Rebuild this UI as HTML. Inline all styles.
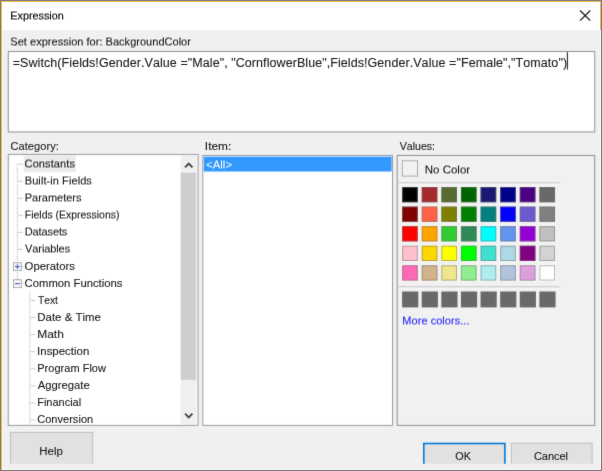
<!DOCTYPE html>
<html><head><meta charset="utf-8"><title>Expression</title>
<style>
html,body{margin:0;padding:0;background:#f0f0f0;overflow:hidden}
body{width:602px;height:471px;overflow:hidden;position:relative}
svg{position:absolute;left:0;top:0;display:block;overflow:hidden;font-family:"Liberation Sans",Arial,sans-serif;font-size:11px}
text{white-space:pre;font-kerning:none}
</style></head><body>
<svg width="602" height="471" viewBox="0 0 602 471">
<defs><filter id="soft" filterUnits="userSpaceOnUse" x="-10" y="-10" width="622" height="491" color-interpolation-filters="sRGB"><feConvolveMatrix order="3" kernelMatrix="1 5 1 5 40 5 1 5 1" edgeMode="duplicate" preserveAlpha="true"/></filter><filter id="tx" filterUnits="userSpaceOnUse" x="-10" y="-10" width="622" height="491" color-interpolation-filters="sRGB"><feConvolveMatrix order="3" kernelMatrix="1 4 1 4 56 4 1 4 1" edgeMode="none" preserveAlpha="false"/></filter><filter id="half" filterUnits="userSpaceOnUse" x="-10" y="-10" width="622" height="491" color-interpolation-filters="sRGB"><feConvolveMatrix order="3" kernelMatrix="0 0 0 1 14 1 1 14 1" edgeMode="none" preserveAlpha="false"/></filter></defs>
<g filter="url(#soft)">
<rect x="-10.00" y="-10.00" width="622.00" height="491.00" fill="#f0f0f0"/>
<rect x="2.00" y="2.00" width="598.00" height="28.30" fill="#ffffff"/>

<path d="M580.1 10.5 L590.3 20.7 M590.3 10.5 L580.1 20.7" stroke="#0a0a0a" stroke-width="1.1" fill="none"/>

<rect x="8.30" y="51.50" width="586.45" height="80.45" fill="#fff" stroke="#909090" stroke-width="1.0"/>

<rect x="566.90" y="52.20" width="1.00" height="17.40" fill="#111"/>



<rect x="8.30" y="154.45" width="189.70" height="270.95" fill="#fff" stroke="#989ba2" stroke-width="1.0"/>
<clipPath id="tc"><rect x="8.7" y="154.9" width="172" height="270"/></clipPath>
<g clip-path="url(#tc)">
<rect x="23.70" y="155.60" width="52.10" height="16.60" fill="#ebebeb"/>
<path d="M17.3 164 V279.5" stroke="#b0b0b0" stroke-width="1" stroke-dasharray="1 1" fill="none"/>
<path d="M29.9 291.5 V426" stroke="#b0b0b0" stroke-width="1" stroke-dasharray="1 1" fill="none"/>
<path d="M18 164.15 H23" stroke="#c8c8c8" stroke-width="1" fill="none"/>

<path d="M18 181.20 H23" stroke="#c8c8c8" stroke-width="1" fill="none"/>

<path d="M18 198.25 H23" stroke="#c8c8c8" stroke-width="1" fill="none"/>

<path d="M18 215.30 H23" stroke="#c8c8c8" stroke-width="1" fill="none"/>

<path d="M18 232.35 H23" stroke="#c8c8c8" stroke-width="1" fill="none"/>

<path d="M18 249.40 H23" stroke="#c8c8c8" stroke-width="1" fill="none"/>

<path d="M21.7 266.45 H23.5" stroke="#c8c8c8" stroke-width="1" fill="none"/>
<rect x="13.50" y="262.70" width="7.8" height="7.8" fill="#f8f9fc" stroke="#ababab" stroke-width="1"/>
<path d="M15.00 266.60 H19.80" stroke="#5566bb" stroke-width="1.1" fill="none"/>
<path d="M17.40 264.20 V269.00" stroke="#5566bb" stroke-width="1.1" fill="none"/>

<path d="M21.7 283.50 H23.5" stroke="#c8c8c8" stroke-width="1" fill="none"/>
<rect x="13.50" y="279.75" width="7.8" height="7.8" fill="#f8f9fc" stroke="#ababab" stroke-width="1"/>
<path d="M15.00 283.65 H19.80" stroke="#5566bb" stroke-width="1.1" fill="none"/>

<path d="M30.5 300.55 H35.5" stroke="#c8c8c8" stroke-width="1" fill="none"/>

<path d="M30.5 317.60 H35.5" stroke="#c8c8c8" stroke-width="1" fill="none"/>

<path d="M30.5 334.65 H35.5" stroke="#c8c8c8" stroke-width="1" fill="none"/>

<path d="M30.5 351.70 H35.5" stroke="#c8c8c8" stroke-width="1" fill="none"/>

<path d="M30.5 368.75 H35.5" stroke="#c8c8c8" stroke-width="1" fill="none"/>

<path d="M30.5 385.80 H35.5" stroke="#c8c8c8" stroke-width="1" fill="none"/>

<path d="M30.5 402.85 H35.5" stroke="#c8c8c8" stroke-width="1" fill="none"/>

<path d="M30.5 419.90 H35.5" stroke="#c8c8c8" stroke-width="1" fill="none"/>

</g>
<rect x="180.70" y="154.90" width="15.50" height="270.00" fill="#f0f0f0"/>
<rect x="180.70" y="172.70" width="15.50" height="207.10" fill="#cdcdcd"/>
<path d="M185.1 167.3 L188.75 163.6 L192.4 167.3" stroke="#3c3c3c" stroke-width="1.75" fill="none"/>
<path d="M185.1 413.7 L188.75 417.4 L192.4 413.7" stroke="#3c3c3c" stroke-width="1.75" fill="none"/>
<rect x="202.80" y="155.45" width="189.70" height="269.95" fill="#fff" stroke="#989ba2" stroke-width="1.0"/>
<rect x="203.80" y="156.65" width="187.80" height="14.85" fill="#3399ff"/>

<rect x="397.20" y="155.45" width="197.55" height="269.95" fill="#f1f1f1" stroke="#8e8e8e" stroke-width="1.0"/>
<rect x="402.30" y="160.80" width="15.20" height="15.30" fill="#f2f2f2" stroke="#a8a8a8" stroke-width="1.0"/>

<rect x="397.70" y="182.20" width="161.80" height="1.30" fill="#cacaca"/>
<rect x="397.70" y="183.50" width="161.80" height="1.00" fill="#f8f8f8"/>
<rect x="401.00" y="185.90" width="17.90" height="17.50" fill="#f8f8f8"/>
<rect x="402.10" y="187.00" width="15.70" height="15.30" fill="#000000"/>
<rect x="402.60" y="187.50" width="14.70" height="14.30" fill="none" stroke="#6e6e6e" stroke-opacity="0.5" stroke-width="1"/>
<rect x="420.61" y="185.90" width="17.90" height="17.50" fill="#f8f8f8"/>
<rect x="421.71" y="187.00" width="15.70" height="15.30" fill="#A52A2A"/>
<rect x="422.21" y="187.50" width="14.70" height="14.30" fill="none" stroke="#6e6e6e" stroke-opacity="0.5" stroke-width="1"/>
<rect x="440.22" y="185.90" width="17.90" height="17.50" fill="#f8f8f8"/>
<rect x="441.32" y="187.00" width="15.70" height="15.30" fill="#556B2F"/>
<rect x="441.82" y="187.50" width="14.70" height="14.30" fill="none" stroke="#6e6e6e" stroke-opacity="0.5" stroke-width="1"/>
<rect x="459.83" y="185.90" width="17.90" height="17.50" fill="#f8f8f8"/>
<rect x="460.93" y="187.00" width="15.70" height="15.30" fill="#006400"/>
<rect x="461.43" y="187.50" width="14.70" height="14.30" fill="none" stroke="#6e6e6e" stroke-opacity="0.5" stroke-width="1"/>
<rect x="479.44" y="185.90" width="17.90" height="17.50" fill="#f8f8f8"/>
<rect x="480.54" y="187.00" width="15.70" height="15.30" fill="#191970"/>
<rect x="481.04" y="187.50" width="14.70" height="14.30" fill="none" stroke="#6e6e6e" stroke-opacity="0.5" stroke-width="1"/>
<rect x="499.05" y="185.90" width="17.90" height="17.50" fill="#f8f8f8"/>
<rect x="500.15" y="187.00" width="15.70" height="15.30" fill="#00008B"/>
<rect x="500.65" y="187.50" width="14.70" height="14.30" fill="none" stroke="#6e6e6e" stroke-opacity="0.5" stroke-width="1"/>
<rect x="518.66" y="185.90" width="17.90" height="17.50" fill="#f8f8f8"/>
<rect x="519.76" y="187.00" width="15.70" height="15.30" fill="#4B0082"/>
<rect x="520.26" y="187.50" width="14.70" height="14.30" fill="none" stroke="#6e6e6e" stroke-opacity="0.5" stroke-width="1"/>
<rect x="538.27" y="185.90" width="17.90" height="17.50" fill="#f8f8f8"/>
<rect x="539.37" y="187.00" width="15.70" height="15.30" fill="#696969"/>
<rect x="539.87" y="187.50" width="14.70" height="14.30" fill="none" stroke="#6e6e6e" stroke-opacity="0.5" stroke-width="1"/>
<rect x="401.00" y="205.47" width="17.90" height="17.50" fill="#f8f8f8"/>
<rect x="402.10" y="206.57" width="15.70" height="15.30" fill="#800000"/>
<rect x="402.60" y="207.07" width="14.70" height="14.30" fill="none" stroke="#6e6e6e" stroke-opacity="0.5" stroke-width="1"/>
<rect x="420.61" y="205.47" width="17.90" height="17.50" fill="#f8f8f8"/>
<rect x="421.71" y="206.57" width="15.70" height="15.30" fill="#FF6347"/>
<rect x="422.21" y="207.07" width="14.70" height="14.30" fill="none" stroke="#6e6e6e" stroke-opacity="0.5" stroke-width="1"/>
<rect x="440.22" y="205.47" width="17.90" height="17.50" fill="#f8f8f8"/>
<rect x="441.32" y="206.57" width="15.70" height="15.30" fill="#808000"/>
<rect x="441.82" y="207.07" width="14.70" height="14.30" fill="none" stroke="#6e6e6e" stroke-opacity="0.5" stroke-width="1"/>
<rect x="459.83" y="205.47" width="17.90" height="17.50" fill="#f8f8f8"/>
<rect x="460.93" y="206.57" width="15.70" height="15.30" fill="#008000"/>
<rect x="461.43" y="207.07" width="14.70" height="14.30" fill="none" stroke="#6e6e6e" stroke-opacity="0.5" stroke-width="1"/>
<rect x="479.44" y="205.47" width="17.90" height="17.50" fill="#f8f8f8"/>
<rect x="480.54" y="206.57" width="15.70" height="15.30" fill="#008080"/>
<rect x="481.04" y="207.07" width="14.70" height="14.30" fill="none" stroke="#6e6e6e" stroke-opacity="0.5" stroke-width="1"/>
<rect x="499.05" y="205.47" width="17.90" height="17.50" fill="#f8f8f8"/>
<rect x="500.15" y="206.57" width="15.70" height="15.30" fill="#0000FF"/>
<rect x="500.65" y="207.07" width="14.70" height="14.30" fill="none" stroke="#6e6e6e" stroke-opacity="0.5" stroke-width="1"/>
<rect x="518.66" y="205.47" width="17.90" height="17.50" fill="#f8f8f8"/>
<rect x="519.76" y="206.57" width="15.70" height="15.30" fill="#6A5ACD"/>
<rect x="520.26" y="207.07" width="14.70" height="14.30" fill="none" stroke="#6e6e6e" stroke-opacity="0.5" stroke-width="1"/>
<rect x="538.27" y="205.47" width="17.90" height="17.50" fill="#f8f8f8"/>
<rect x="539.37" y="206.57" width="15.70" height="15.30" fill="#808080"/>
<rect x="539.87" y="207.07" width="14.70" height="14.30" fill="none" stroke="#6e6e6e" stroke-opacity="0.5" stroke-width="1"/>
<rect x="401.00" y="225.04" width="17.90" height="17.50" fill="#f8f8f8"/>
<rect x="402.10" y="226.14" width="15.70" height="15.30" fill="#FF0000"/>
<rect x="402.60" y="226.64" width="14.70" height="14.30" fill="none" stroke="#6e6e6e" stroke-opacity="0.5" stroke-width="1"/>
<rect x="420.61" y="225.04" width="17.90" height="17.50" fill="#f8f8f8"/>
<rect x="421.71" y="226.14" width="15.70" height="15.30" fill="#FFA500"/>
<rect x="422.21" y="226.64" width="14.70" height="14.30" fill="none" stroke="#6e6e6e" stroke-opacity="0.5" stroke-width="1"/>
<rect x="440.22" y="225.04" width="17.90" height="17.50" fill="#f8f8f8"/>
<rect x="441.32" y="226.14" width="15.70" height="15.30" fill="#32CD32"/>
<rect x="441.82" y="226.64" width="14.70" height="14.30" fill="none" stroke="#6e6e6e" stroke-opacity="0.5" stroke-width="1"/>
<rect x="459.83" y="225.04" width="17.90" height="17.50" fill="#f8f8f8"/>
<rect x="460.93" y="226.14" width="15.70" height="15.30" fill="#2E8B57"/>
<rect x="461.43" y="226.64" width="14.70" height="14.30" fill="none" stroke="#6e6e6e" stroke-opacity="0.5" stroke-width="1"/>
<rect x="479.44" y="225.04" width="17.90" height="17.50" fill="#f8f8f8"/>
<rect x="480.54" y="226.14" width="15.70" height="15.30" fill="#00FFFF"/>
<rect x="481.04" y="226.64" width="14.70" height="14.30" fill="none" stroke="#6e6e6e" stroke-opacity="0.5" stroke-width="1"/>
<rect x="499.05" y="225.04" width="17.90" height="17.50" fill="#f8f8f8"/>
<rect x="500.15" y="226.14" width="15.70" height="15.30" fill="#6495ED"/>
<rect x="500.65" y="226.64" width="14.70" height="14.30" fill="none" stroke="#6e6e6e" stroke-opacity="0.5" stroke-width="1"/>
<rect x="518.66" y="225.04" width="17.90" height="17.50" fill="#f8f8f8"/>
<rect x="519.76" y="226.14" width="15.70" height="15.30" fill="#9400D3"/>
<rect x="520.26" y="226.64" width="14.70" height="14.30" fill="none" stroke="#6e6e6e" stroke-opacity="0.5" stroke-width="1"/>
<rect x="538.27" y="225.04" width="17.90" height="17.50" fill="#f8f8f8"/>
<rect x="539.37" y="226.14" width="15.70" height="15.30" fill="#C0C0C0"/>
<rect x="539.87" y="226.64" width="14.70" height="14.30" fill="none" stroke="#6e6e6e" stroke-opacity="0.5" stroke-width="1"/>
<rect x="401.00" y="244.61" width="17.90" height="17.50" fill="#f8f8f8"/>
<rect x="402.10" y="245.71" width="15.70" height="15.30" fill="#FFC0CB"/>
<rect x="402.60" y="246.21" width="14.70" height="14.30" fill="none" stroke="#6e6e6e" stroke-opacity="0.5" stroke-width="1"/>
<rect x="420.61" y="244.61" width="17.90" height="17.50" fill="#f8f8f8"/>
<rect x="421.71" y="245.71" width="15.70" height="15.30" fill="#FFD700"/>
<rect x="422.21" y="246.21" width="14.70" height="14.30" fill="none" stroke="#6e6e6e" stroke-opacity="0.5" stroke-width="1"/>
<rect x="440.22" y="244.61" width="17.90" height="17.50" fill="#f8f8f8"/>
<rect x="441.32" y="245.71" width="15.70" height="15.30" fill="#FFFF00"/>
<rect x="441.82" y="246.21" width="14.70" height="14.30" fill="none" stroke="#6e6e6e" stroke-opacity="0.5" stroke-width="1"/>
<rect x="459.83" y="244.61" width="17.90" height="17.50" fill="#f8f8f8"/>
<rect x="460.93" y="245.71" width="15.70" height="15.30" fill="#00FF00"/>
<rect x="461.43" y="246.21" width="14.70" height="14.30" fill="none" stroke="#6e6e6e" stroke-opacity="0.5" stroke-width="1"/>
<rect x="479.44" y="244.61" width="17.90" height="17.50" fill="#f8f8f8"/>
<rect x="480.54" y="245.71" width="15.70" height="15.30" fill="#40E0D0"/>
<rect x="481.04" y="246.21" width="14.70" height="14.30" fill="none" stroke="#6e6e6e" stroke-opacity="0.5" stroke-width="1"/>
<rect x="499.05" y="244.61" width="17.90" height="17.50" fill="#f8f8f8"/>
<rect x="500.15" y="245.71" width="15.70" height="15.30" fill="#ADD8E6"/>
<rect x="500.65" y="246.21" width="14.70" height="14.30" fill="none" stroke="#6e6e6e" stroke-opacity="0.5" stroke-width="1"/>
<rect x="518.66" y="244.61" width="17.90" height="17.50" fill="#f8f8f8"/>
<rect x="519.76" y="245.71" width="15.70" height="15.30" fill="#800080"/>
<rect x="520.26" y="246.21" width="14.70" height="14.30" fill="none" stroke="#6e6e6e" stroke-opacity="0.5" stroke-width="1"/>
<rect x="538.27" y="244.61" width="17.90" height="17.50" fill="#f8f8f8"/>
<rect x="539.37" y="245.71" width="15.70" height="15.30" fill="#D3D3D3"/>
<rect x="539.87" y="246.21" width="14.70" height="14.30" fill="none" stroke="#6e6e6e" stroke-opacity="0.5" stroke-width="1"/>
<rect x="401.00" y="264.18" width="17.90" height="17.50" fill="#f8f8f8"/>
<rect x="402.10" y="265.28" width="15.70" height="15.30" fill="#FF69B4"/>
<rect x="402.60" y="265.78" width="14.70" height="14.30" fill="none" stroke="#6e6e6e" stroke-opacity="0.5" stroke-width="1"/>
<rect x="420.61" y="264.18" width="17.90" height="17.50" fill="#f8f8f8"/>
<rect x="421.71" y="265.28" width="15.70" height="15.30" fill="#D2B48C"/>
<rect x="422.21" y="265.78" width="14.70" height="14.30" fill="none" stroke="#6e6e6e" stroke-opacity="0.5" stroke-width="1"/>
<rect x="440.22" y="264.18" width="17.90" height="17.50" fill="#f8f8f8"/>
<rect x="441.32" y="265.28" width="15.70" height="15.30" fill="#F0E68C"/>
<rect x="441.82" y="265.78" width="14.70" height="14.30" fill="none" stroke="#6e6e6e" stroke-opacity="0.5" stroke-width="1"/>
<rect x="459.83" y="264.18" width="17.90" height="17.50" fill="#f8f8f8"/>
<rect x="460.93" y="265.28" width="15.70" height="15.30" fill="#90EE90"/>
<rect x="461.43" y="265.78" width="14.70" height="14.30" fill="none" stroke="#6e6e6e" stroke-opacity="0.5" stroke-width="1"/>
<rect x="479.44" y="264.18" width="17.90" height="17.50" fill="#f8f8f8"/>
<rect x="480.54" y="265.28" width="15.70" height="15.30" fill="#AFEEEE"/>
<rect x="481.04" y="265.78" width="14.70" height="14.30" fill="none" stroke="#6e6e6e" stroke-opacity="0.5" stroke-width="1"/>
<rect x="499.05" y="264.18" width="17.90" height="17.50" fill="#f8f8f8"/>
<rect x="500.15" y="265.28" width="15.70" height="15.30" fill="#B0C4DE"/>
<rect x="500.65" y="265.78" width="14.70" height="14.30" fill="none" stroke="#6e6e6e" stroke-opacity="0.5" stroke-width="1"/>
<rect x="518.66" y="264.18" width="17.90" height="17.50" fill="#f8f8f8"/>
<rect x="519.76" y="265.28" width="15.70" height="15.30" fill="#DDA0DD"/>
<rect x="520.26" y="265.78" width="14.70" height="14.30" fill="none" stroke="#6e6e6e" stroke-opacity="0.5" stroke-width="1"/>
<rect x="538.27" y="264.18" width="17.90" height="17.50" fill="#f8f8f8"/>
<rect x="539.37" y="265.28" width="15.70" height="15.30" fill="#FFFFFF"/>
<rect x="539.87" y="265.78" width="14.70" height="14.30" fill="none" stroke="#6e6e6e" stroke-opacity="0.5" stroke-width="1"/>
<rect x="397.70" y="286.20" width="161.80" height="1.30" fill="#c8c8c8"/>
<rect x="397.70" y="287.60" width="161.80" height="1.00" fill="#f8f8f8"/>
<rect x="402.10" y="291.50" width="16.20" height="15.90" fill="#696969"/>
<rect x="421.71" y="291.50" width="16.20" height="15.90" fill="#696969"/>
<rect x="441.32" y="291.50" width="16.20" height="15.90" fill="#696969"/>
<rect x="460.93" y="291.50" width="16.20" height="15.90" fill="#696969"/>
<rect x="480.54" y="291.50" width="16.20" height="15.90" fill="#696969"/>
<rect x="500.15" y="291.50" width="16.20" height="15.90" fill="#696969"/>
<rect x="519.76" y="291.50" width="16.20" height="15.90" fill="#696969"/>
<rect x="539.37" y="291.50" width="16.20" height="15.90" fill="#696969"/>

<rect x="10.70" y="432.40" width="82.00" height="34.10" fill="#e1e1e1" stroke="#bebebe" stroke-width="1.0"/>

<rect x="423.80" y="443.50" width="81.10" height="22.70" fill="#e1e1e1" stroke="#0078d7" stroke-width="1.6"/>

<rect x="511.40" y="443.20" width="80.70" height="23.30" fill="#e1e1e1" stroke="#bebebe" stroke-width="1.0"/>

<rect x="3.00" y="463.80" width="597.00" height="5.20" fill="#f0f0f0"/>
</g>
<g filter="url(#tx)">
<text x="12.74" y="67" font-size="12.5" letter-spacing="0.070" fill="#1c1c1c" stroke="#1c1c1c" stroke-width="0.12">=Switch(Fields!Gender.Value ="Male", "CornflowerBlue",Fields!Gender.Value ="Female","Tomato")</text>
<text x="10.49" y="150" font-size="11" letter-spacing="0.084" fill="#1c1c1c" stroke="#1c1c1c" stroke-width="0.12">Category:</text>
<text transform="translate(204.85 150) scale(1.0789 1)" font-size="11" fill="#1c1c1c" stroke="#1c1c1c" stroke-width="0.12">Item:</text>
<text transform="translate(399.70 150) scale(0.9653 1)" font-size="11" fill="#1c1c1c" stroke="#1c1c1c" stroke-width="0.12">Values:</text>
<text transform="translate(24.61 270) scale(1.0294 1)" font-size="11" fill="#1c1c1c" stroke="#1c1c1c" stroke-width="0.12">Operators</text>
<text transform="translate(24.58 287) scale(1.0274 1)" font-size="11" fill="#1c1c1c" stroke="#1c1c1c" stroke-width="0.12">Common Functions</text>
<text transform="translate(37.92 304) scale(0.9352 1)" font-size="11" fill="#1c1c1c" stroke="#1c1c1c" stroke-width="0.12">Text</text>
<text transform="translate(37.21 321) scale(1.0446 1)" font-size="11" fill="#1c1c1c" stroke="#1c1c1c" stroke-width="0.12">Date &amp; Time</text>
<text transform="translate(37.17 338) scale(1.0903 1)" font-size="11" fill="#1c1c1c" stroke="#1c1c1c" stroke-width="0.12">Math</text>
<text transform="translate(37.09 355) scale(1.0410 1)" font-size="11" fill="#1c1c1c" stroke="#1c1c1c" stroke-width="0.12">Inspection</text>
<text x="37.25" y="372" font-size="11" letter-spacing="0.020" fill="#1c1c1c" stroke="#1c1c1c" stroke-width="0.12">Program Flow</text>
<text transform="translate(37.73 389) scale(1.0248 1)" font-size="11" fill="#1c1c1c" stroke="#1c1c1c" stroke-width="0.12">Aggregate</text>
<text x="37.25" y="406" font-size="11" letter-spacing="-0.023" fill="#1c1c1c" stroke="#1c1c1c" stroke-width="0.12">Financial</text>
<text x="37.19" y="423" font-size="11" letter-spacing="0.037" fill="#1c1c1c" stroke="#1c1c1c" stroke-width="0.12">Conversion</text>
<text transform="translate(39.31 455) scale(1.0396 1)" font-size="11" fill="#1c1c1c" stroke="#1c1c1c" stroke-width="0.12">Help</text>
<text transform="translate(455.34 460) scale(0.9837 1)" font-size="11" fill="#1c1c1c" stroke="#1c1c1c" stroke-width="0.12">OK</text>
<text x="533.89" y="460" font-size="11" letter-spacing="-0.029" fill="#1c1c1c" stroke="#1c1c1c" stroke-width="0.12">Cancel</text>
</g>
<g filter="url(#half)">
<text transform="translate(10.26 19) scale(0.9485 1)" font-size="11.4" fill="#000" stroke="#000" stroke-width="0.15">Expression</text>
<text x="10.35" y="45" font-size="11" letter-spacing="0.024" fill="#1c1c1c" stroke="#1c1c1c" stroke-width="0.12">Set expression for: BackgroundColor</text>
<text x="24.59" y="167" font-size="11" letter-spacing="0.104" fill="#1c1c1c" stroke="#1c1c1c" stroke-width="0.12">Constants</text>
<text x="24.75" y="184" font-size="11" letter-spacing="0.077" fill="#1c1c1c" stroke="#1c1c1c" stroke-width="0.12">Built-in Fields</text>
<text x="24.75" y="201" font-size="11" letter-spacing="-0.017" fill="#1c1c1c" stroke="#1c1c1c" stroke-width="0.12">Parameters</text>
<text transform="translate(24.79 218) scale(0.9515 1)" font-size="11" fill="#1c1c1c" stroke="#1c1c1c" stroke-width="0.12">Fields (Expressions)</text>
<text x="24.75" y="235" font-size="11" letter-spacing="-0.116" fill="#1c1c1c" stroke="#1c1c1c" stroke-width="0.12">Datasets</text>
<text x="25.10" y="252" font-size="11" letter-spacing="-0.102" fill="#1c1c1c" stroke="#1c1c1c" stroke-width="0.12">Variables</text>
<text transform="translate(206.09 168) scale(1.0378 1)" font-size="11" fill="#fff">&lt;All&gt;</text>
<text transform="translate(424.81 173) scale(1.0445 1)" font-size="11" fill="#1c1c1c" stroke="#1c1c1c" stroke-width="0.12">No Color</text>
<text x="402.35" y="324" font-size="11" letter-spacing="0.037" fill="#2a2aff" stroke="#2a2aff" stroke-width="0.12">More colors...</text>
</g>
<rect x="2.00" y="469.00" width="599.00" height="1.00" fill="#f4f4f4"/>
<rect x="2.00" y="30.00" width="1.00" height="439.00" fill="#f4f3f0"/>
<rect x="600.00" y="30.00" width="1.00" height="439.00" fill="#f5f5f5"/>
<rect x="1.00" y="1.00" width="600.00" height="1.00" fill="#f0ba48"/>
<rect x="1.00" y="1.00" width="1.00" height="469.00" fill="#f0ba48"/>
<rect x="600.00" y="1.00" width="1.00" height="29.00" fill="#f0ba48"/>
<rect x="0.00" y="0.00" width="602.00" height="1.00" fill="#7e7e81"/>
<rect x="0.00" y="0.00" width="1.00" height="471.00" fill="#7e7e81"/>
<rect x="601.00" y="0.00" width="1.00" height="471.00" fill="#7b7b7b"/>
<rect x="0.00" y="470.00" width="602.00" height="1.00" fill="#7b7b7b"/>
</svg>
</body></html>
